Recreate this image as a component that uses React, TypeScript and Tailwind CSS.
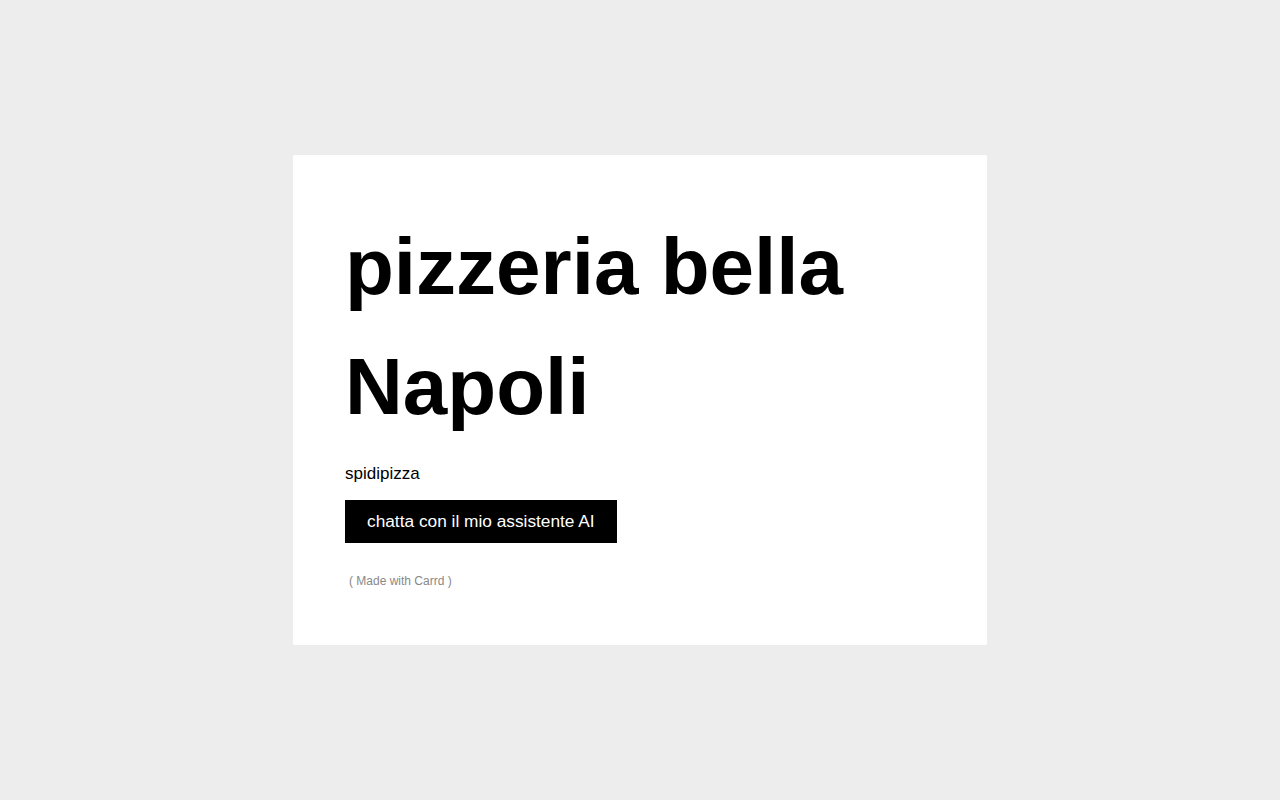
export default function App() {
  return (
    <div
      className="min-h-screen w-full bg-[#ededed] flex items-center justify-center"
      style={{ fontFamily: '"Liberation Sans", Arial, sans-serif' }}
    >
      <div className="w-[694px] bg-white pt-[52px] pb-[55px] px-[52px] flex flex-col items-start">
        <h1 className="text-[80px] leading-[120px] font-bold text-black">
          pizzeria bella
          <br />
          Napoli
        </h1>
        <p className="mt-[14px] text-[17px] leading-[1.5] text-black">spidipizza</p>
        <button className="mt-[14px] h-[43px] px-[22px] bg-black text-white text-[17.3px] leading-none">
          chatta con il mio assistente AI
        </button>
        <p className="mt-[29px] ml-[4px] text-[12px] leading-[1.5] text-[#888888]">( Made with Carrd )</p>
      </div>
    </div>
  );
}
